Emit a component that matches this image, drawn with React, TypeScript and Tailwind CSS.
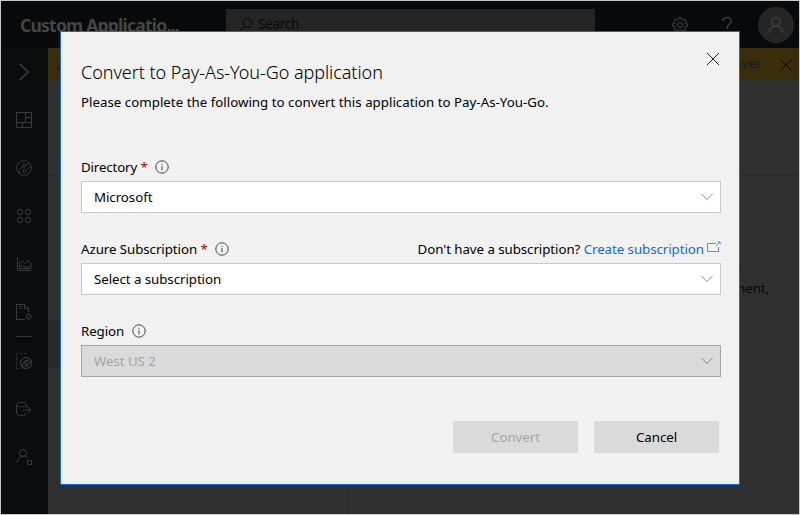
import type { ReactNode } from "react";

function Icon({ children, className = "" }: { children: ReactNode; className?: string }) {
  return (
    <svg viewBox="0 0 16 16" width="16" height="16" fill="none" stroke="currentColor" className={`shrink-0 ${className}`}>
      {children}
    </svg>
  );
}

function Gauge() {
  return (
    <>
      <circle cx="8" cy="8" r="7.4" />
      <path d="M3.5 14V10.5C3.5 8.5 5 7.5 7.2 7.2M15 5.5L9.8 10.5M13.5 3.5L9.3 5.2" />
      <circle cx="8" cy="5.5" r="1.6" />
      <circle cx="8.4" cy="11" r="1.6" />
    </>
  );
}

function Sidebar() {
  return (
    <nav className="flex w-[47px] shrink-0 flex-col items-center bg-[#0b0c0e] pr-px text-[#3b3b3c]">
      <div className="flex h-12 items-center text-[#454545]">
        <Icon className="overflow-visible"><path d="M4 0L12 8L4 16" strokeWidth="1.2" /></Icon>
      </div>
      <div className="flex h-12 items-center"><Icon><path d="M.5 .5H15.5V15.5H.5ZM.5 10.5H15.5M9.5 .5V10.5M9.5 5.5H15.5M6.5 10.5V15.5" /></Icon></div>
      <div className="flex h-12 items-center"><Icon><Gauge /></Icon></div>
      <div className="flex h-12 items-center">
        <Icon>
          <circle cx="4" cy="4" r="2.6" /><circle cx="12" cy="4" r="2.6" />
          <circle cx="4" cy="12" r="2.6" /><circle cx="12" cy="12" r="2.6" />
        </Icon>
      </div>
      <div className="flex h-12 items-center">
        <Icon><path d="M1.5 1V14.5H15.5M3.5 12.5V6.5L6.5 5.5L9 7.5L12.5 4.5L15 8V12.5ZM3.5 11L6.5 9.5L10.5 11.5L15 9.5" /></Icon>
      </div>
      <div className="flex h-12 items-center">
        <Icon>
          <path d="M9 15.5H.5V.5H8.5L12.5 4.5V8M8.5 .5V4.5H12.5" />
          <path d="M2.5 2.5H6.5M2.5 4.5H6.5" strokeDasharray="1 .5" />
          <circle cx="12.5" cy="12.5" r="2" />
          <circle cx="12.5" cy="12.5" r="2.9" strokeDasharray="1.1 1.18" />
        </Icon>
      </div>
      <div className="h-px w-4 bg-[#343434]" />
      <div className="flex h-12 items-center">
        <Icon>
          <path d="M0 .5H12M.5 0V16M0 15.5H4" strokeDasharray="1 1" />
          <svg x="4" y="4" width="12" height="12" viewBox="0 0 16 16" strokeWidth="1.4"><Gauge /></svg>
        </Icon>
      </div>
      <div className="flex h-12 items-center">
        <Icon>
          <ellipse cx="5.5" cy="3.5" rx="5" ry="2.2" />
          <path d="M.5 3.5V12.5C.5 15.2 10.5 15.2 10.5 12.5V11.5M10.5 3.5V6.5M7 9H15M12 6L15 9L12 12" />
        </Icon>
      </div>
      <div className="flex h-12 items-center">
        <Icon><circle cx="7" cy="4" r="3.5" /><path d="M1.3 13.5C1.3 6 11 5.5 12 9.5M11.5 11.5H15.5V15.5H11.5Z" /></Icon>
      </div>
    </nav>
  );
}

function Header() {
  return (
    <header className="flex h-[47px] shrink-0 items-center bg-[#080a0b] text-[#454545]">
      <div className="w-[206px] pl-[19px] text-[17.5px] leading-6 font-bold tracking-[-0.77px] whitespace-nowrap">Custom Applicatio...</div>
      <div className="ml-[19px] flex h-8 w-[369px] items-center gap-1 bg-[#252525] pl-3 text-[#090909]">
        <Icon><circle cx="9.5" cy="6" r="4.5" /><path d="M6.2 9.2L1 14.5" /></Icon>
        <span className="text-[13.5px] tracking-[-0.3px]">Search</span>
      </div>
      <div className="ml-auto flex items-center pr-[5px]">
        <Icon>
          <path d="M6.7 .7H9.3L9.7 2.7L11 3.3L12.8 2.1L14.1 3.8L12.8 5.4L13.3 6.7H15.3V9.3H13.3L12.8 10.6L14 12.4L12.3 14L10.6 12.8L9.3 13.3V15.3H6.7V13.3L5.4 12.8L3.7 14L2 12.3L3.2 10.6L2.7 9.3H.7V6.7H2.7L3.2 5.4L2 3.7L3.7 2L5.4 3.2L6.7 2.7Z" />
          <circle cx="8" cy="8" r="2.5" />
        </Icon>
        <Icon className="ml-[31px]"><path d="M3.8 4.3C3.8-.8 12.2-.8 12.2 4C12.2 7 8.3 7 8.3 10.8V12M8.3 14V15.5" strokeWidth="1.2" /></Icon>
        <div className="ml-[23px] flex size-9 items-center justify-center rounded-full bg-[#252525] text-[#414141]">
          <Icon><circle cx="8" cy="4.8" r="4.2" strokeWidth="1.3" /><path d="M1.2 16C1.2 6.8 14.8 6.8 14.8 16" strokeWidth="1.3" /></Icon>
        </div>
      </div>
    </header>
  );
}

function InfoIcon() {
  return (
    <svg width="14" height="14" viewBox="0 0 14 14" fill="none" stroke="#454545">
      <circle cx="7" cy="7" r="6.2" /><path d="M7 6V10.4M7 3.8V4.9" />
    </svg>
  );
}

function SelectBox({ value, disabled = false }: { value: string; disabled?: boolean }) {
  return (
    <div className={`flex h-8 items-center justify-between border pr-[7px] pl-3 ${disabled ? "border-[#a6a6a6] bg-[#dadada] text-[#a6a6a6]" : "border-[#c8c8c8] bg-white"}`}>
      <span className="pt-px tracking-[-0.06px]">{value}</span>
      <svg width="12" height="8" viewBox="0 0 12 8" fill="none" stroke="#6890aa"><path d="M.3 .8L6 6.5L11.7 .8" /></svg>
    </div>
  );
}

function Dialog() {
  return (
    <section role="dialog" className="absolute top-[30px] left-[59px] flex h-[454px] w-[680px] flex-col border border-[#1267f5] bg-[#f1f1f1] pr-[18px] pl-5 text-black">
      <div className="flex h-[62px] shrink-0 items-end justify-between">
        <h1 className="pb-2.5 text-[18px] leading-6 font-light tracking-[-0.05px] whitespace-nowrap">Convert to Pay-As-You-Go application</h1>
        <svg className="mr-px mb-7" width="14" height="14" viewBox="0 0 14 14" stroke="#222"><path d="M1 1L13 13M13 1L1 13" /></svg>
      </div>
      <p className="-mt-0.5 h-[65px] leading-5 tracking-[0.01px] whitespace-nowrap">Please complete the following to convert this application to Pay-As-You-Go.</p>
      <div className="flex h-6 items-start gap-[7px] leading-5">
        <span className="tracking-[-0.14px]">Directory <span className="text-[#a80000]">*</span></span>
        <span className="pt-[3px]"><InfoIcon /></span>
      </div>
      <div className="w-[640px]"><SelectBox value="Microsoft" /></div>
      <div className="mt-[26px] flex h-6 w-[640px] items-start gap-[7px] leading-5 whitespace-nowrap">
        <span className="tracking-[-0.06px]">Azure Subscription <span className="text-[#a80000]">*</span></span>
        <span className="pt-[3px]"><InfoIcon /></span>
        <span className="ml-auto tracking-[-0.06px]">Don't have a subscription? <span className="text-[#1267e8]">Create subscription</span></span>
        <svg className="mt-[2px] -ml-[4px]" width="14" height="12" viewBox="0 0 14 12" fill="none" stroke="#6b83df"><path d="M9 2.5H.5V10.5H11.5V6M8.5 5.5L13 1M10.5 .9H13.1V3.5" /></svg>
      </div>
      <div className="w-[640px]"><SelectBox value="Select a subscription" /></div>
      <div className="mt-[26px] flex h-6 items-start gap-2 leading-5">
        <span className="tracking-[-0.1px]">Region</span>
        <span className="pt-[3px]"><InfoIcon /></span>
      </div>
      <div className="w-[640px]"><SelectBox value="West US 2" disabled /></div>
      <div className="mt-11 flex justify-end gap-4 pr-[2px]">
        <button className="h-8 w-[125px] bg-[#dadada] pt-px tracking-[-0.05px] text-[#a6a6a6]">Convert</button>
        <button className="h-8 w-[125px] bg-[#dadada] pt-px tracking-[-0.05px]">Cancel</button>
      </div>
    </section>
  );
}

export default function App() {
  return (
    <div className="relative flex h-[515px] w-[800px] flex-col overflow-hidden border border-[#c8c8c8] bg-[#303030] font-['Noto_Sans','Open_Sans',sans-serif] text-[13.3px] text-black">
      <Header />
      <div className="flex min-h-0 grow">
        <Sidebar />
        <main className="flex grow flex-col">
          <div className="flex h-8 shrink-0 items-center justify-between bg-[#3a2d09] pr-[6px] pl-2 text-[#141716]">
            <svg width="14" height="14" viewBox="0 0 14 14" fill="none" stroke="currentColor"><path d="M7 1L13 12.5H1ZM7 5V9M7 10V11" /></svg>
            <div className="flex items-center gap-[19px]">
              <span className="w-[41px] overflow-hidden text-[#101c2a]">conver</span>
              <svg className="mt-0.5" width="14" height="14" viewBox="0 0 14 14" stroke="#090909"><path d="M1 1L13 13M13 1L1 13" /></svg>
            </div>
          </div>
          <div className="h-24 shrink-0 border-b border-[#292929]" />
          <div className="flex grow">
            <div className="w-[300px] border-r border-[#292929] pt-36"><div className="h-12 bg-[#292929]" /></div>
            <div className="flex grow flex-col items-end pt-[82px] pr-[30px] leading-5 tracking-[-0.1px] text-[#080808]">
              <span className="pr-[27px] text-[#142132]">application</span>
              <span>environment,</span>
            </div>
          </div>
        </main>
      </div>
      <Dialog />
    </div>
  );
}
